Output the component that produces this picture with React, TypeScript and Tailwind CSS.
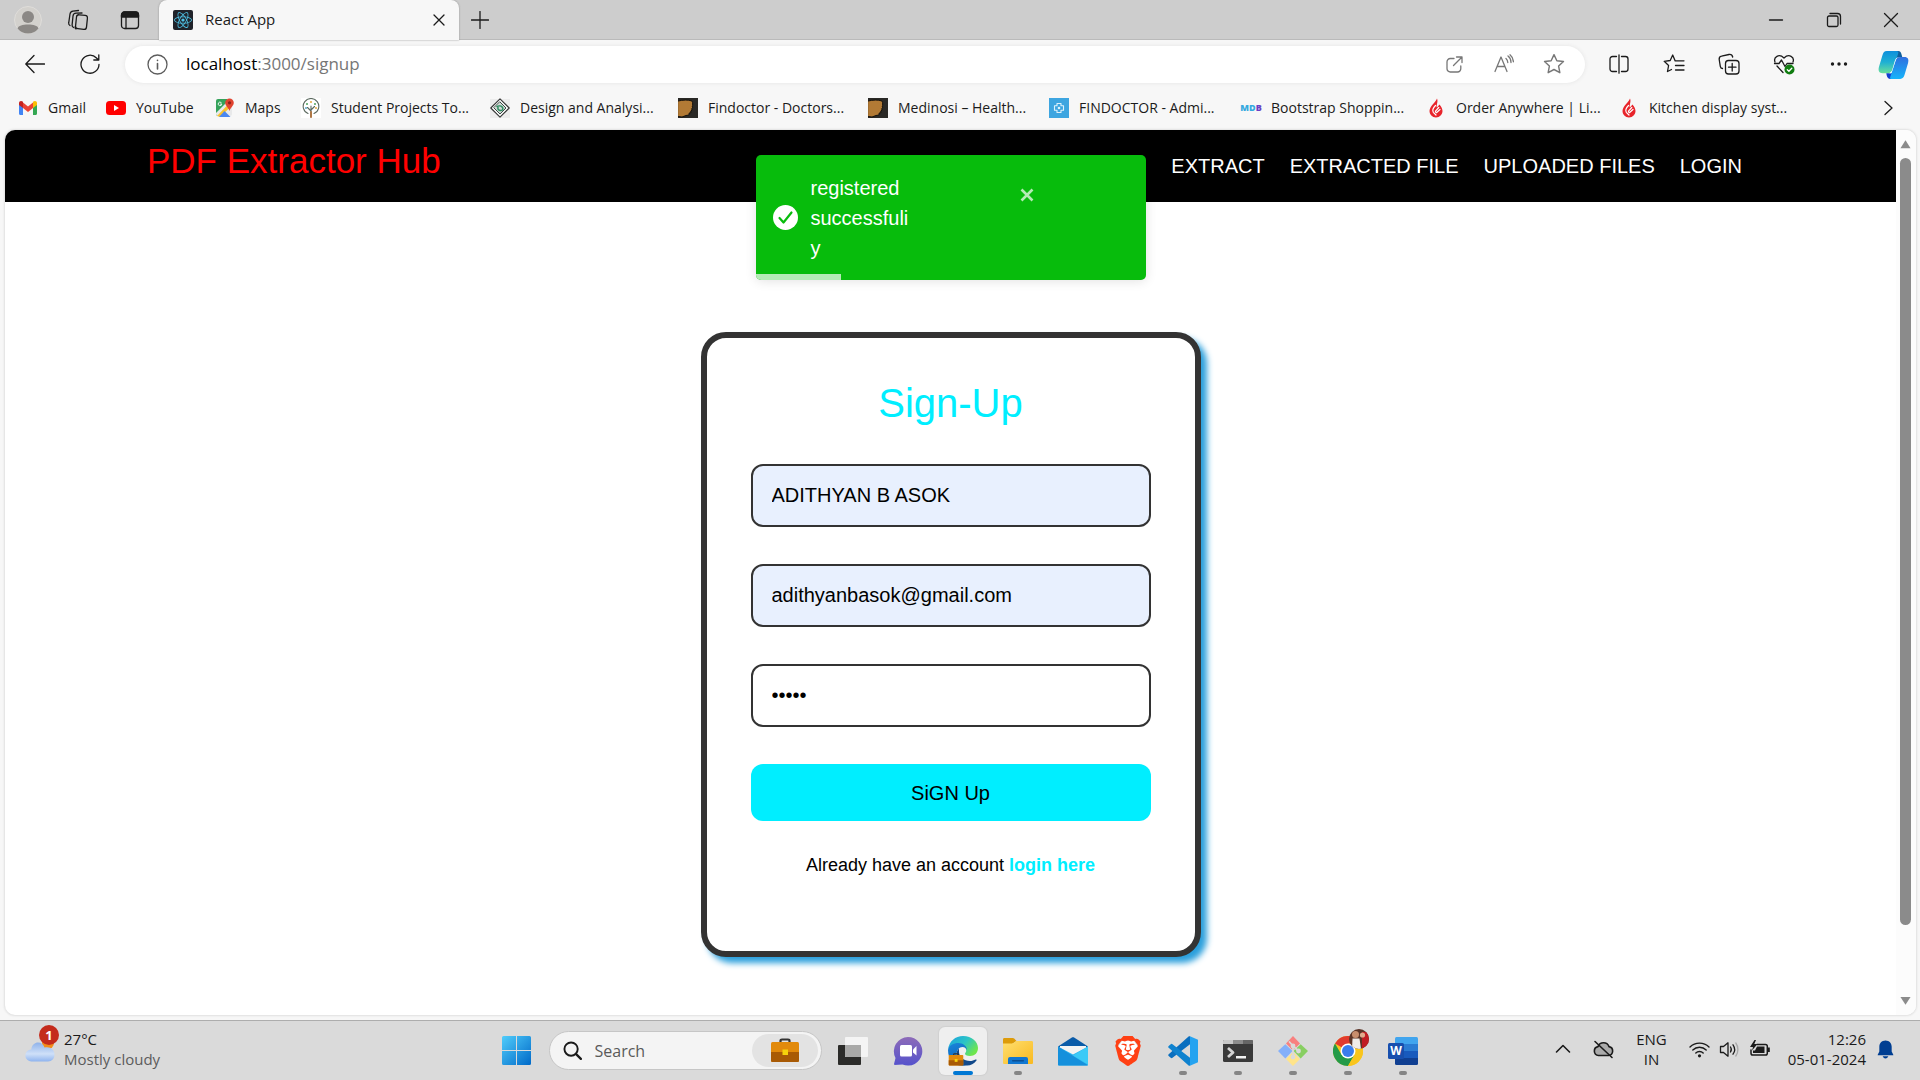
import React from "react";
import { FaReact } from "react-icons/fa";
import { SiBrave } from "react-icons/si";

type SvgProps = { className?: string; children: React.ReactNode; box?: string };

function Svg({ className = "size-5", children, box = "0 0 20 20" }: SvgProps) {
  return (
    <svg viewBox={box} className={`shrink-0 ${className}`} fill="none" stroke="currentColor" strokeWidth="1.3" strokeLinecap="round" strokeLinejoin="round" aria-hidden="true">
      {children}
    </svg>
  );
}

/* ---------- Browser chrome ---------- */

function TabStrip() {
  return (
    <div className="flex h-10 items-stretch bg-[#cdcdcd] shadow-[inset_0_-1px_0_#bababa]">
      <div className="flex w-[159px] shrink-0 items-center pl-[14px]">
        <button aria-label="Profile" className="mr-6 size-7">
          <Svg className="size-7" box="0 0 28 28">
            <circle cx="14" cy="14" r="13.5" fill="#d3d1cd" stroke="#dfddda" strokeWidth="1" />
            <circle cx="14" cy="11" r="6" fill="#8b8885" stroke="none" />
            <path d="M3.5 22.5c1-3 5-4 10.500-4s9.500 1 10.500 4a13.500 13.500 0 0 1-21 0Z" fill="#8b8885" stroke="none" />
          </Svg>
        </button>
        <button aria-label="Workspaces" className="mr-8 size-[22px]">
          <Svg className="size-[22px]" box="0 0 22 22">
            <rect x="10" y="6" width="11" height="14" rx="2.500" transform="rotate(6 15 13)" />
            <path d="M7.500 18.500c-1-.5-1.500-1.500-1.400-2.500L7 7c.2-1.800 1.300-2.700 3-2.800l6-.2" />
            <path d="M4 16.500c-1-.6-1.500-1.500-1.300-2.500L4 5c.3-1.800 1.400-2.700 3-2.900L12.500 1.500" />
            <path d="M10 20c-.8-.5-1-1.300-.9-2" />
          </Svg>
        </button>
        <button aria-label="Tab actions" className="size-5">
          <Svg>
            <rect x="1.500" y="2" width="17" height="16.500" rx="3" />
            <path d="M1.500 7V5a3 3 0 0 1 3-3h11a3 3 0 0 1 3 3v2Z" fill="currentColor" />
            <path d="M6 7v11.500" />
          </Svg>
        </button>
      </div>
      <div className="flex w-[300px] shrink-0 items-center rounded-t-lg bg-[#f7f7f7] pl-[14px] pr-[10px] shadow-[0_0_2px_#8a8a8a]">
        <span className="flex size-5 items-center justify-center rounded-xs bg-[#20232a]">
          <FaReact className="size-[18px] text-[#4fc4e8]" />
        </span>
        <span className="ml-3 flex-1 pb-px text-[15px]">React App</span>
        <button aria-label="Close tab" className="p-1">
          <Svg className="size-3" box="0 0 12 12">
            <path d="M1 1l10 10M11 1 1 11" />
          </Svg>
        </button>
      </div>
      <button aria-label="New tab" className="ml-3 self-center">
        <Svg className="size-[18px]" box="0 0 18 18">
          <path d="M9 .500v17M.500 9h17" />
        </Svg>
      </button>
      <div className="ml-auto flex items-center">
        <button aria-label="Minimize" className="flex w-[58px] justify-center">
          <Svg className="size-4" box="0 0 16 16">
            <path d="M1.500 8h13" />
          </Svg>
        </button>
        <button aria-label="Restore" className="flex w-[57px] justify-center">
          <Svg className="size-4" box="0 0 16 16">
            <rect x="1.500" y="4" width="10.500" height="10.500" rx="1.500" />
            <path d="M4 1.500h7.500a3 3 0 0 1 3 3V12" />
          </Svg>
        </button>
        <button aria-label="Close" className="flex w-[58px] justify-center">
          <Svg className="size-4" box="0 0 16 16">
            <path d="M1.500 1.500l13 13M14.500 1.500l-13 13" />
          </Svg>
        </button>
      </div>
    </div>
  );
}

function ToolButton({ label, children }: { label: string; children: React.ReactNode }) {
  return (
    <button aria-label={label} className="flex w-[55px] shrink-0 items-center justify-center">
      {children}
    </button>
  );
}

const STAR = "M10 1.500l2.600 5.500 6 .8-4.400 4.100 1.100 6L10 15l-5.300 2.900 1.100-6L1.400 7.800l6-.8Z";

function Toolbar() {
  return (
    <div className="flex h-12 items-center">
      <div className="flex w-[125px] shrink-0 items-center gap-[35px] pl-[25px]">
        <button aria-label="Back">
          <Svg>
            <path d="M19.500 10H1M9 1.500.8 10 9 18.500" />
          </Svg>
        </button>
        <button aria-label="Refresh">
          <Svg>
            <path d="M19 10.500A9 9 0 1 1 16.500 4L18.500 6M18.800.8V6h-5" />
          </Svg>
        </button>
      </div>
      <div className="flex h-[37px] min-w-0 flex-1 items-center rounded-full bg-white pl-[22px] pr-[6px] shadow-[0_0_4px_#e4e4e4]">
        <Svg className="size-[21px] text-[#5c5c5c]" box="0 0 21 21">
          <circle cx="10.500" cy="10.500" r="9.500" />
          <path d="M10.500 9.500v5.500M10.500 6.200v.3" strokeWidth="1.600" />
        </Svg>
        <div className="ml-[18px] flex-1 text-[17px] text-[#767676]">
          <span className="text-black">localhost</span>:3000/signup
        </div>
        <div className="flex items-center text-[#777]">
          <button aria-label="Open in app" className="flex w-[50px] justify-center">
            <Svg className="size-[17px]" box="0 0 17 17">
              <path d="M8 2.500H4.500A3.300 3.300 0 0 0 1 6v6.500A3.300 3.300 0 0 0 4.500 16h7a3.300 3.300 0 0 0 3.300-3.500V10M10.500 1H16v5.500M16 1 7.500 9.500" />
            </Svg>
          </button>
          <button aria-label="Read aloud" className="flex w-[50px] justify-center">
            <Svg>
              <path d="M1 17.500 7 3l6 14.500M3 12.500h8M12 4.500c1.200 1 1.700 2.300 1.800 4M14 2c2 1.500 3 3.800 3 6.500M16 .800c2.200 1.800 3.300 4.200 3.400 7" />
            </Svg>
          </button>
          <button aria-label="Add to favorites" className="flex w-[50px] justify-center">
            <Svg className="size-[22px]">
              <path d={STAR} />
            </Svg>
          </button>
        </div>
      </div>
      <div className="ml-[6px] flex">
        <ToolButton label="Split screen">
          <Svg>
            <path d="M7.500 2.500h-4A2.500 2.500 0 0 0 1 5v10a2.500 2.500 0 0 0 2.500 2.500h4M12.500 2.500h4A2.500 2.500 0 0 1 19 5v10a2.500 2.500 0 0 1-2.500 2.500h-4M10 .800v18.400" />
          </Svg>
        </ToolButton>
        <ToolButton label="Favorites">
          <Svg className="size-[22px]" box="0 0 22 22">
            <path d="M12 7.500 9.700 2 7.200 7.500l-6 .8 4.400 4.200-1.100 6L8.500 16.500M12 7.800h9M12.500 12.500H21M12.500 17H21" />
          </Svg>
        </ToolButton>
        <ToolButton label="Collections">
          <Svg className="size-[22px]" box="0 0 22 22">
            <rect x="7.500" y="7.500" width="13.500" height="13.500" rx="3" />
            <path d="M14.200 10.500v7.500M10.500 14.200H18M4.500 15.500c-1.500-.2-2-1-2.200-2.200L1.200 6.500C1 4.500 1.800 3.500 3.500 3.200L11 1.500c2-.3 3.200.3 3.700 2.500" />
          </Svg>
        </ToolButton>
        <ToolButton label="Browser essentials">
          <Svg className="size-[22px]" box="0 0 22 22">
            <path d="M2 9C.200 4 6 .200 11 5c5-4.800 10.800-1 9 4M4 13l6 6.500M1.500 10.500H6L8.500 7l3.500 6.500 2-3h6" />
            <circle cx="16.500" cy="16.500" r="5" fill="#107c10" stroke="none" />
            <path d="M14.300 16.700l1.600 1.500 2.900-3" stroke="#fff" />
          </Svg>
        </ToolButton>
        <ToolButton label="Settings and more">
          <Svg>
            <g fill="currentColor" stroke="none">
              <circle cx="3.500" cy="10" r="1.700" />
              <circle cx="10" cy="10" r="1.700" />
              <circle cx="16.500" cy="10" r="1.700" />
            </g>
          </Svg>
        </ToolButton>
        <button aria-label="Copilot" className="flex w-[54px] shrink-0 justify-center">
          <Svg className="size-[31px]" box="0 0 30 30">
            <defs>
              <linearGradient id="cpA" x1="0" y1="0" x2="0" y2="1">
                <stop offset="0" stopColor="#0d8fdc" />
                <stop offset=".5" stopColor="#1fb0d3" />
                <stop offset="1" stopColor="#6be09a" />
              </linearGradient>
              <linearGradient id="cpB" x1="0" y1="0" x2="0" y2="1">
                <stop offset="0" stopColor="#2f6fdf" />
                <stop offset="1" stopColor="#16b4fa" />
              </linearGradient>
            </defs>
            <g stroke="none">
              <path d="M15 2h4.500c2 0 3 1.500 3.500 4l.8 3H15Z" fill="#0f5e9c" />
              <path d="M8.500 2H18c1.500 0 2 1 1.500 2.500L14 20c-.7 2-2 3.500-4.500 3.500H4.500C1 23.500 0 21 .900 17.500L4.300 6C5 3.500 6.200 2 8.500 2Z" fill="url(#cpA)" />
              <path d="M8 23.500h5l3-6 .5 11.500H12c-2 0-3-1-3.500-3Z" fill="#123fd0" />
              <path d="M21.500 29H13c-1.500 0-1.500-1-1-2.500L17 11c.7-2 2-3.200 4.500-3.200h4C29 7.800 30 10 29.100 13.500L25.700 25c-.7 2.500-1.900 4-4.200 4Z" fill="url(#cpB)" />
              <path d="M16.200 11.500c.6-2 1.800-3.500 4-3.700h1.300c-2.500 0-3.700 1.200-4.500 3.700l-3.700 11.200c-.5.600-1.300.8-2.500.8 1.500-.6 2.400-1.700 3-3.500Z" fill="#fff" />
            </g>
          </Svg>
        </button>
      </div>
    </div>
  );
}

/* ---------- Bookmark icons ---------- */

const gmail = (
  <Svg box="0 0 20 20">
    <g stroke="none">
      <path d="M1 5v10.500c0 .8.600 1.500 1.400 1.500H5V8Z" fill="#4285f4" />
      <path d="M15 8v9h2.600c.8 0 1.400-.7 1.400-1.500V5Z" fill="#34a853" />
      <path d="M5 4.500 10 8.500l5-4V10l-5 4-5-4Z" fill="#ea4335" />
      <path d="M1 7V5c0-2 2.300-2.700 4-1.200V10Z" fill="#c5221f" />
      <path d="M19 7V5c0-2-2.300-2.700-4-1.200V10Z" fill="#fbbc04" />
    </g>
  </Svg>
);
const youtube = (
  <Svg>
    <rect x="0" y="3" width="20" height="14" rx="3.500" fill="#f00" stroke="none" />
    <path d="M8 7v6l5-3Z" fill="#fff" stroke="none" />
  </Svg>
);
const maps = (
  <Svg>
    <g stroke="none">
      <path d="M1 3a2 2 0 0 1 2-2h9v9l-8 8H3a2 2 0 0 1-2-2Z" fill="#34a25a" />
      <path d="M1 15 13 3l4 4v9a2 2 0 0 1-2 2H3a2 2 0 0 1-2-2Z" fill="#e8e9ea" />
      <path d="M2 18 14 5.500 16.500 8 5 19Z" fill="#f9c22d" />
      <path d="M4 19l5.500-6 6 6Z" fill="#4a87f0" />
      <path d="M14.500.500a4.300 4.300 0 0 1 4.300 4.300c0 3-3 4.200-4.300 8.200-1.300-4-4.300-5.200-4.300-8.200A4.300 4.300 0 0 1 14.500.500Z" fill="#e0432f" />
      <circle cx="14.500" cy="4.800" r="1.600" fill="#8d2018" />
    </g>
    <path d="M6.300 4.600a1.800 1.800 0 1 0 .5 1.500H5.300" stroke="#fff" strokeWidth=".9" />
  </Svg>
);
const tree = (
  <Svg>
    <rect width="20" height="20" fill="#fff" stroke="none" />
    <path d="M7 15.500A7.800 7.800 0 1 1 13 15.500M10 19V8M10 13 6.500 9.500M10 12l3.500-3.500" stroke="#5c6a60" strokeWidth="1.100" />
    <path d="M10 14v5" stroke="#b0723c" strokeWidth="1.800" />
    <g stroke="none">
      <circle cx="6" cy="6" r="1" fill="#4fa35c" />
      <circle cx="10" cy="4" r="1" fill="#e2a93b" />
      <circle cx="14" cy="6" r="1" fill="#4fa35c" />
      <circle cx="5" cy="10" r="1" fill="#5aa5c8" />
      <circle cx="15" cy="10" r="1" fill="#e2a93b" />
    </g>
  </Svg>
);
const gfg = (
  <Svg>
    <rect y="1" width="20" height="19" fill="#ececec" stroke="none" />
    <path d="M10 .800 19.200 10 10 19.200.800 10Z" fill="#fff" stroke="#333" strokeWidth="1.100" />
    <path d="M10 4 16 10l-6 6-6-6Z" fill="#cfd8d3" stroke="#3b4a44" strokeWidth="1" />
    <path d="M7 8.500c2-1 4.500-.5 5.500 1s0 3-2 3-3-1.500-2.500-3" stroke="#2f8d61" strokeWidth="1.500" />
  </Svg>
);
const beard = (
  <Svg>
    <rect width="20" height="20" fill="#2a2926" stroke="none" />
    <path d="M0 3c5-1 10-1.500 14 0 1 2 .8 4 .2 6l.6.800-1.300 1 .8 1.200-1.600 1 .5 1.500-2 .5L11 17 8 17.500 4 19l-4-.5Z" fill="#b27a35" stroke="#15120e" strokeWidth="1" />
  </Svg>
);
const clinic = (
  <Svg>
    <rect width="20" height="20" fill="#3da5e0" stroke="none" />
    <path d="M8 5.500h4v2.300h2.500v4.400H12v2.300H8v-2.300H5.500V7.800H8Z" stroke="#dff2fc" strokeWidth="1.100" />
    <circle cx="10" cy="10" r="1.300" fill="#dff2fc" stroke="none" />
  </Svg>
);
const mdb = (
  <span className="flex size-5 shrink-0 items-center justify-center text-[9px] font-black text-[#36a9df]" aria-hidden="true">
    MD<span className="text-[#6a3fc4]">B</span>
  </span>
);
const flame = (
  <Svg>
    <g stroke="none">
      <path d="M11 .500C10 4 3.500 8 3.500 13c0 3.500 2.800 6.500 6.500 6.500s6.500-3 6.500-6.500c0-2.500-1.500-4.500-3-6.500L11 9.500C9.800 7.500 12.500 4 11 .500Z" fill="#e8242b" />
    </g>
    <path d="M9.500 7.500C7 10 6 12 7.300 14.300L10 17M12.800 9.500 9.700 12.800c-.6.800 0 1.600.7 1.900L14 11.500" stroke="#fff" strokeWidth="1.200" />
  </Svg>
);

const bookmarks = [
  { label: "Gmail", icon: gmail, width: "w-[88px]" },
  { label: "YouTube", icon: youtube, width: "w-[109px]" },
  { label: "Maps", icon: maps, width: "w-[86px]" },
  { label: "Student Projects To...", icon: tree, width: "w-[189px]" },
  { label: "Design and Analysi...", icon: gfg, width: "w-[188px]" },
  { label: "Findoctor - Doctors...", icon: beard, width: "w-[190px]" },
  { label: "Medinosi – Health...", icon: beard, width: "w-[181px]" },
  { label: "FINDOCTOR - Admi...", icon: clinic, width: "w-[192px]" },
  { label: "Bootstrap Shoppin...", icon: mdb, width: "w-[185px]" },
  { label: "Order Anywhere | Li...", icon: flame, width: "w-[193px]" },
  { label: "Kitchen display syst...", icon: flame, width: "w-[190px]" },
];

function BookmarksBar() {
  return (
    <nav aria-label="Bookmarks" className="flex h-[42px] items-center pb-[3px] pl-[18px] pr-6 text-[14px]">
      {bookmarks.map((b) => (
        <a key={b.label} href="#" className={`flex shrink-0 items-center gap-[10px] whitespace-nowrap ${b.width}`}>
          {b.icon}
          {b.label}
        </a>
      ))}
      <button aria-label="More bookmarks" className="ml-auto">
        <Svg className="size-4" box="0 0 16 16">
          <path d="M5 1.500 12 8l-7 6.500" />
        </Svg>
      </button>
    </nav>
  );
}

/* ---------- Page ---------- */

function SiteHeader() {
  return (
    <header className="flex h-[72px] shrink-0 items-center justify-between bg-black pl-[142px] pr-[154px]">
      <a href="#" className="pb-[10px] text-[35px] text-[#f00]">PDF Extractor Hub</a>
      <nav className="flex gap-[25px] text-xl text-white">
        <a href="#">EXTRACT</a>
        <a href="#">EXTRACTED FILE</a>
        <a href="#">UPLOADED FILES</a>
        <a href="#">LOGIN</a>
      </nav>
    </header>
  );
}

function Toast() {
  return (
    <div role="alert" className="absolute left-1/2 top-[25px] h-[125px] w-[390px] -translate-x-1/2 overflow-hidden rounded-[5px] bg-[#07bc0c] text-white shadow-[0_1px_12px_rgba(0,0,0,0.12)]">
      <div className="flex h-full items-center pl-[17px]">
        <Svg className="size-[25px]" box="0 0 25 25">
          <circle cx="12.500" cy="12.500" r="12.500" fill="#fff" stroke="none" />
          <path d="M6.500 13l4 4.500 8-10" stroke="#07bc0c" strokeWidth="2.200" />
        </Svg>
        <p className="ml-[13px] w-[100px] text-xl leading-[30px] break-all">registered successfuliy</p>
        <button aria-label="close" className="mb-[46px] ml-[108px] text-[#b5ebb6]">
          <Svg className="size-4" box="0 0 16 16">
            <path d="M2.500 2.500l11 11M13.500 2.500l-11 11" strokeWidth="2.600" strokeLinecap="butt" />
          </Svg>
        </button>
      </div>
      <div className="absolute bottom-0 left-0 h-[6px] w-[85px] bg-[#b5ebb6]" />
    </div>
  );
}

const FIELD = "h-[63px] w-full rounded-xl border-2 border-[#333] px-[19px] text-xl text-black outline-none";

function SignUpForm() {
  return (
    <form className="w-[500px] rounded-[25px] border-[6px] border-[#333] bg-white px-11 pb-[72px] pt-[39px] text-center shadow-[6px_6px_6px_#2a9fdc]" onSubmit={(e) => e.preventDefault()}>
      <h1 className="text-[40px] leading-[52px] text-[#00eeff]">Sign-Up</h1>
      <div className="mt-[35px] flex flex-col gap-[37px]">
        <input aria-label="Name" type="text" defaultValue="ADITHYAN B ASOK" className={`${FIELD} bg-[#e8f0fe]`} />
        <input aria-label="Email" type="email" defaultValue="adithyanbasok@gmail.com" className={`${FIELD} bg-[#e8f0fe]`} />
        <input aria-label="Password" type="password" defaultValue="12345" className={`${FIELD} bg-white`} />
        <button type="submit" className="h-[57px] rounded-xl bg-[#00eeff] text-xl text-black">SiGN Up</button>
      </div>
      <p className="mt-[30px] text-lg text-black">
        Already have an account <a href="#" className="font-bold text-[#00eeff]">login here</a>
      </p>
    </form>
  );
}

function ScrollBar() {
  return (
    <div className="flex w-5 shrink-0 flex-col items-center bg-[#fcfcfc] py-[9px] pr-px text-[#8b8b8b]" aria-hidden="true">
      <Svg className="h-[10px] w-[11px]" box="0 0 12 10">
        <path d="M6 1 11.500 9.500H.500Z" fill="currentColor" stroke="none" />
      </Svg>
      <div className="mb-[71px] mt-[9px] w-[11px] flex-1 rounded-full bg-[#8b8b8b]" />
      <Svg className="h-[10px] w-[11px]" box="0 0 12 10">
        <path d="M6 9 11.500.500H.500Z" fill="currentColor" stroke="none" />
      </Svg>
    </div>
  );
}

/* ---------- Taskbar icons ---------- */

const taskView = (
  <Svg className="size-[30px]" box="0 0 30 30">
    <g stroke="none">
      <rect x="0" y="9" width="23" height="20" rx="1" fill="#2b2b29" />
      <rect x="7" y="1" width="23" height="20" rx="1" fill="#f4f4f4" />
      <path d="M7 9h16v12H8a1 1 0 0 1-1-1Z" fill="#a9a9a8" />
    </g>
  </Svg>
);
const chat = (
  <Svg className="size-[30px]" box="0 0 30 30">
    <defs>
      <linearGradient id="chat" x1="0" y1="0" x2="0" y2="1">
        <stop offset="0" stopColor="#8d6bb8" />
        <stop offset="1" stopColor="#5552cc" />
      </linearGradient>
    </defs>
    <g stroke="none">
      <path d="M15 1a14.300 14.300 0 1 1-5.500 27.500L1.500 29 1 28l1.500-6A14.300 14.300 0 0 1 15 1Z" fill="url(#chat)" />
      <rect x="7" y="9" width="12" height="11.500" rx="1.500" fill="#fff" />
      <path d="m20 13.500 3.500-3.500v9.500L20 16.500Z" fill="#fff" />
    </g>
  </Svg>
);
const briefcase = (cls: string) => (
  <Svg className={cls} box="0 0 30 25">
    <path d="M10.500 5V2.800C10.500 2 11 1.500 12 1.500h6c1 0 1.500.5 1.500 1.300V5" stroke="#333" strokeWidth="2.200" />
    <g stroke="none">
      <rect x="1" y="4" width="28" height="20" rx="1.500" fill="#e28a0b" />
      <path d="M1 14h28v8.500a1.500 1.500 0 0 1-1.500 1.500h-25A1.500 1.500 0 0 1 1 22.500Z" fill="#a85a05" />
      <rect x="12.500" y="11.500" width="5.500" height="5.500" fill="#f6d30c" />
    </g>
  </Svg>
);
const edge = (
  <span className="relative flex">
    <Svg className="size-[30px]" box="0 0 30 30">
      <defs>
        <linearGradient id="edgeA" x1="0" y1="0" x2="1" y2=".6">
          <stop offset="0" stopColor="#1a9fe0" />
          <stop offset=".55" stopColor="#2bc4c6" />
          <stop offset="1" stopColor="#6ee64c" />
        </linearGradient>
        <linearGradient id="edgeB" x1="0" y1="0" x2=".3" y2="1">
          <stop offset="0" stopColor="#1a86dd" />
          <stop offset="1" stopColor="#0b60b4" />
        </linearGradient>
      </defs>
      <g stroke="none">
        <path d="M0 14C1 5 7.500 0 15 0c9 0 15 6 15 12 0 5-3.500 8-8 8-3.500 0-5-1.200-5-2.200 0-.8 1.200-1.300 1.200-3.600 0-3-3-6-7.200-6C5.500 8.200 1 10.500 0 14Z" fill="url(#edgeA)" />
        <path d="M0 14c.8-4.500 5.500-7 10.500-7 4 0 8.500 2.800 8.500 7-1-2-2.500-3-4.500-3-3.500 0-6 3.500-6 7.500 0 5.500 4 10.500 9.500 11C8 31.500 0 25 0 14Z" fill="url(#edgeB)" />
        <path d="M11 16c0 5 5 9 11 9 2 0 4-.7 5.500-1.500.8-.4 1.400.3 1 1C25.500 28.500 22 30 17.500 29.500 12 29 8.500 24 8.500 18.500c0-2.500 1-4.700 2.500-6Z" fill="#11498a" />
      </g>
    </Svg>
    <span className="absolute bottom-0 left-0">{briefcase("h-[13px] w-4")}</span>
  </span>
);
const folder = (
  <Svg className="size-[30px]" box="0 0 30 30">
    <defs>
      <linearGradient id="fold" x1="0" y1="0" x2="1" y2="1">
        <stop offset="0" stopColor="#ffdf70" />
        <stop offset="1" stopColor="#f9b91f" />
      </linearGradient>
    </defs>
    <g stroke="none">
      <path d="M0 3.500C0 2.500.500 2 1.500 2h8.300c.6 0 1 .2 1.400.6L13.500 5 9 8H0Z" fill="#dd9b0a" />
      <path d="M0 7.500h9c.6 0 1-.2 1.500-.5L13 5h15.500c1 0 1.500.5 1.500 1.500v20c0 1-.5 1.500-1.500 1.500h-27C.500 28 0 27.500 0 26.500Z" fill="url(#fold)" />
      <path d="M5 28v-5a2 2 0 0 1 2-2h16a2 2 0 0 1 2 2v5Z" fill="#1177d1" />
      <rect x="9" y="24" width="12" height="1.500" rx=".7" fill="#0b4f94" />
    </g>
  </Svg>
);
const mail = (
  <Svg className="size-[30px]" box="0 0 30 30">
    <g stroke="none">
      <path d="M0 10.500 13.500 1.800c1-.6 2-.6 3 0L30 10.500 15 20Z" fill="#0a5ba8" />
      <path d="M2 10h26v4L15 20 2 14Z" fill="#f3f3f3" />
      <path d="M0 10.500 15 18.500 30 10.500V28.500a1 1 0 0 1-1 1H1a1 1 0 0 1-1-1Z" fill="#2cb4ef" />
      <path d="M0 10.500 30 29.300l-1 .2H1a1 1 0 0 1-1-1Z" fill="#1590dc" />
      <path d="M15 19.500 30 10.500V28.500Z" fill="#3ccaf7" />
    </g>
  </Svg>
);
const brave = (
  <span className="relative flex size-[30px] items-center justify-center text-[#ff4014]">
    <svg viewBox="0 0 30 30" className="absolute inset-0" aria-hidden="true">
      <path d="M9 5h12l4 6-3 11-7 5-7-5L5 11Z" fill="#fff" />
    </svg>
    <SiBrave className="relative size-[30px]" />
  </span>
);
const vscode = (
  <Svg className="size-[30px]" box="0 0 30 30">
    <g stroke="none">
      <path d="M22 .300v8L4.500 21.800a1.500 1.500 0 0 1-1.800 0l-2-1.800a1.200 1.200 0 0 1 0-1.800L20.300.800c.5-.5 1.100-.6 1.700-.5Z" fill="#0b6fbf" />
      <path d="M22 29.700v-8L4.500 8.200a1.500 1.500 0 0 0-1.800 0l-2 1.800a1.200 1.200 0 0 0 0 1.800l19.600 17.400c.5.500 1.100.6 1.700.5Z" fill="#0f82cf" />
      <path d="M22 .300 30 3.800v22.400l-8 3.500V.300Z" fill="#25a3f0" />
    </g>
  </Svg>
);
const terminal = (
  <Svg className="size-[30px]" box="0 0 30 30">
    <g stroke="none">
      <rect x="0" y="4" width="30" height="22" rx="1.500" fill="#3a3a3a" />
      <path d="M0 8V5.500C0 4.500.500 4 1.500 4H10v4Z" fill="#c9c9c9" />
      <path d="M10 4h10v4H10Z" fill="#8d8d8d" />
      <path d="M20 4h8.500c1 0 1.500.5 1.500 1.500V8H20Z" fill="#666" />
      <rect x="13" y="20" width="10" height="2.500" fill="#f2f2f2" />
    </g>
    <path d="m5 12 5 4.500L5 21" stroke="#d5d5d5" strokeWidth="2.800" strokeLinecap="butt" />
  </Svg>
);
const git = (
  <Svg className="size-[30px]" box="0 0 30 30">
    <g stroke="none">
      <path d="M15 0 22 7.500 15 14.500 8 7.500Z" fill="#f8807f" />
      <path d="M7.300 8.200 14.500 15 7.300 22.500 0 15Z" fill="#84b0fa" />
      <path d="M22.700 8.200 30 15l-7.300 7.500L15.500 15Z" fill="#88cf62" />
      <path d="M15 16l7 7-7 7-7-7Z" fill="#ffe48a" />
      <circle cx="15" cy="21" r="2.400" fill="#dadada" />
      <circle cx="20.500" cy="15" r="2.400" fill="#dadada" />
      <circle cx="15" cy="10" r="2.400" fill="#dadada" />
    </g>
    <path d="M15 21V10l-3.500-4M15 10l5.500 5" stroke="#dadada" strokeWidth="1.800" />
  </Svg>
);
const chrome = (
  <span className="relative flex">
    <Svg className="size-[30px]" box="0 0 30 30">
      <g stroke="none">
        <circle cx="15" cy="15" r="15" fill="#f9c51d" />
        <path d="M15 15 2 7.500A15 15 0 0 1 28 7.500H15Z" fill="#e23b2e" />
        <path d="M2 7.500A15 15 0 0 0 15 30l6.500-11.200L15 15l-6.500 3.800Z" fill="#249a48" />
        <path d="M28 7.500A15 15 0 0 1 15 30l6.500-11.200V7.500Z" fill="#f9c51d" />
        <circle cx="15" cy="15" r="7.500" fill="#fff" />
        <circle cx="15" cy="15" r="6" fill="#3a7ded" />
      </g>
    </Svg>
    <Svg className="absolute -right-[6px] -top-[7px] size-5">
      <defs>
        <clipPath id="face"><circle cx="10" cy="10" r="10" /></clipPath>
      </defs>
      <g clipPath="url(#face)" stroke="none">
        <rect width="20" height="20" fill="#5b3327" />
        <path d="M13 3h7v17h-7Z" fill="#c01c22" />
        <circle cx="6.500" cy="5.500" r="3.500" fill="#c98d6d" />
        <path d="M3.500 9.500h7L12 20H3Z" fill="#f0ebe8" />
        <circle cx="13.500" cy="6" r="2.600" fill="#e0aa8c" />
      </g>
    </Svg>
  </span>
);
const word = (
  <span className="relative flex">
    <Svg className="size-[30px]" box="0 0 30 30">
      <g stroke="none">
        <path d="M7 2.500A1.500 1.500 0 0 1 8.500 1h20A1.500 1.500 0 0 1 30 2.500V8H7Z" fill="#41a5ee" />
        <path d="M7 8h23v7H7Z" fill="#2b7cd3" />
        <path d="M7 15h23v7H7Z" fill="#185abd" />
        <path d="M7 22h23v5.500a1.500 1.500 0 0 1-1.500 1.500h-20A1.500 1.500 0 0 1 7 27.500Z" fill="#103f91" />
        <rect x="0" y="7" width="16" height="16" rx="1.500" fill="#174fae" />
      </g>
    </Svg>
    <span className="absolute left-0 top-[7px] flex size-4 items-center justify-center text-[12px] font-bold leading-none text-white" aria-hidden="true">W</span>
  </span>
);

const apps = [
  { label: "Task View", icon: taskView },
  { label: "Chat", icon: chat },
  { label: "Microsoft Edge", icon: edge, active: true },
  { label: "File Explorer", icon: folder, running: true },
  { label: "Mail", icon: mail },
  { label: "Brave", icon: brave },
  { label: "Visual Studio Code", icon: vscode, running: true },
  { label: "Terminal", icon: terminal, running: true },
  { label: "Git", icon: git, running: true },
  { label: "Google Chrome", icon: chrome, running: true },
  { label: "Word", icon: word, running: true },
];

function Taskbar() {
  return (
    <footer className="grid h-[60px] shrink-0 grid-cols-[1fr_auto_1fr] items-center border-t border-[#adadad] bg-[#dadada] text-[15px] text-[#1a1a1a]">
      <button className="relative flex items-center gap-[9px] justify-self-start pb-[3px] pl-[25px] text-left leading-5">
        <Svg className="size-[30px]" box="0 0 30 30">
          <defs>
            <linearGradient id="cloud" x1="0" y1="0" x2="0" y2="1">
              <stop offset="0" stopColor="#8fb2ea" />
              <stop offset=".6" stopColor="#cfe0f8" />
              <stop offset="1" stopColor="#8fb4ef" />
            </linearGradient>
          </defs>
          <circle cx="23" cy="9" r="6" fill="#f28c1a" stroke="none" />
          <path d="M6.500 27.500a6 6 0 0 1-.3-12C7 10.500 10 8.500 13 8.500c3.500 0 5.500 2 6.500 5 6-1.500 10 2.500 10 7 0 4-2.500 7-6.500 7Z" fill="url(#cloud)" stroke="none" />
        </Svg>
        <span className="absolute -top-1 left-[39px] flex size-5 items-center justify-center rounded-full bg-[#c42b1c] text-[13px] font-bold text-white">1</span>
        <span>
          27°C
          <br />
          <span className="text-[#5c5c5c]">Mostly cloudy</span>
        </span>
      </button>

      <div className="flex items-center pl-3">
        <button aria-label="Start" className="mr-[18px]">
          <Svg className="size-[29px]" box="0 0 29 29">
            <defs>
              <linearGradient id="win" gradientUnits="userSpaceOnUse" x1="0" y1="0" x2="29" y2="29">
                <stop offset="0" stopColor="#50cdfb" />
                <stop offset="1" stopColor="#0069c8" />
              </linearGradient>
            </defs>
            <g fill="url(#win)" stroke="none">
              <path d="M1.500 0H14v14H0V1.500A1.500 1.500 0 0 1 1.500 0ZM15 0h12.500A1.500 1.500 0 0 1 29 1.500V14H15ZM0 15h14v14H1.500A1.500 1.500 0 0 1 0 27.500ZM15 15h14v12.500a1.500 1.500 0 0 1-1.500 1.500H15Z" />
            </g>
          </Svg>
        </button>
        <div className="flex h-[39px] w-[273px] items-center rounded-full border border-[#c6c6c6] bg-[#f4f4f4] pl-[13px] pr-[3px]">
          <Svg className="size-[19px]">
            <circle cx="8.500" cy="8.500" r="7" strokeWidth="2" />
            <path d="m13.800 13.800 5 5" strokeWidth="2.400" />
          </Svg>
          <input aria-label="Search" placeholder="Search" className="ml-[13px] w-0 flex-1 bg-transparent text-base outline-none placeholder:text-[#5a5a5a]" />
          <span className="flex h-[33px] w-[66px] items-center justify-center rounded-full bg-[#e3e3e3]">{briefcase("h-[25px] w-[30px]")}</span>
        </div>
        <div className="ml-1 flex">
          {apps.map((app) => (
            <button key={app.label} aria-label={app.label} className="flex w-[55px] justify-center">
              <span className={`relative flex size-12 items-center justify-center rounded-md ${app.active ? "bg-[#efefef] shadow-[0_0_1px_1px_#d0d0d0]" : ""}`}>
                {app.icon}
                {app.active && <span className="absolute bottom-0 h-1 w-5 rounded-full bg-[#0078d4]" />}
                {app.running && <span className="absolute bottom-0 h-1 w-2 rounded-full bg-[#858585]" />}
              </span>
            </button>
          ))}
        </div>
      </div>

      <div className="flex items-center justify-self-end pb-[3px] pr-[25px]">
        <button aria-label="Show hidden icons" className="mr-[22px]">
          <Svg className="size-4" box="0 0 16 16">
            <path d="m1.500 11 6.500-6.500 6.500 6.500" strokeWidth="1.600" />
          </Svg>
        </button>
        <Svg className="mr-[22px] size-[21px]" box="0 0 21 21">
          <path d="M5.500 16.500A4.500 4.500 0 0 1 5 7.600C6 5 8 3.800 10.500 3.800S15 5 16 7.600a4.500 4.500 0 0 1-.5 8.900Z" fill="#aaa" strokeWidth="1.600" />
          <path d="M2 2.500 19 18.500" strokeWidth="1.600" />
        </Svg>
        <button className="mr-[22px] text-center leading-5">
          ENG
          <br />
          IN
        </button>
        <button aria-label="Network, volume and battery" className="mr-[18px] flex items-center gap-[9px]">
          <Svg className="size-[21px]" box="0 0 21 21">
            <path d="M1 8a13.500 13.500 0 0 1 19 0M3.800 11a9.500 9.500 0 0 1 13.400 0M6.800 14a5.300 5.300 0 0 1 7.400 0" strokeWidth="1.400" />
            <circle cx="10.500" cy="16.800" r="1.600" fill="currentColor" stroke="none" />
          </Svg>
          <Svg className="size-[21px]" box="0 0 21 21">
            <path d="M1.500 7.500H4.500L9 3.800v13.400L4.500 13.500H1.500ZM11.500 8c1 1.500 1 3.500 0 5M14 5.800c2 2.800 2 6.600 0 9.400" />
            <path d="M16.800 4c2.800 3.800 2.800 9.200 0 13" stroke="#a8a8a8" />
          </Svg>
          <Svg className="size-[21px]" box="0 0 21 21">
            <path d="M8 5.500h8.500c1 0 1.800.800 1.800 1.800v6.900c0 1-.8 1.800-1.800 1.800H3.800c-1 0-1.800-.8-1.800-1.800V11" strokeWidth="1.500" />
            <path d="M19 8.500h1.800v4.500H19ZM8 7.500h7.500v6.500H4V11.500h2ZM5.500 1 1 8h3L3 11.500 8.500 5H5.300L7 1Z" fill="currentColor" stroke="none" />
          </Svg>
        </button>
        <button className="mr-[10px] text-right leading-5">
          12:26
          <br />
          05-01-2024
        </button>
        <button aria-label="Notifications" className="text-[#003e92]">
          <Svg className="size-[19px]" box="0 0 19 20">
            <path d="M9.500.500c4 0 6.500 3 6.500 6.500v5l1.700 3.500v.5H1.300v-.5L3 12V7C3 3.500 5.500.500 9.500.500ZM6.500 17.200h6c-.5 1.300-1.500 2.200-3 2.200s-2.500-.9-3-2.200Z" fill="currentColor" stroke="none" />
          </Svg>
        </button>
      </div>
    </footer>
  );
}

export default function App() {
  return (
    <div className="flex min-h-screen flex-col bg-[#f7f7f7] font-['Open_Sans','Noto_Sans',sans-serif] text-[#1b1b1b]">
      <TabStrip />
      <Toolbar />
      <BookmarksBar />
      <div className="mb-[5px] ml-[5px] mr-1 flex flex-1 overflow-hidden rounded-[10px] bg-white shadow-[0_0_2px_1px_#e0e0e0]">
        <div className="relative flex min-w-0 flex-1 flex-col font-['Liberation_Sans',Arial,sans-serif]">
          <SiteHeader />
          <main className="flex flex-1 items-start justify-center pb-12 pt-[130px]">
            <SignUpForm />
          </main>
          <Toast />
        </div>
        <ScrollBar />
      </div>
      <Taskbar />
    </div>
  );
}
